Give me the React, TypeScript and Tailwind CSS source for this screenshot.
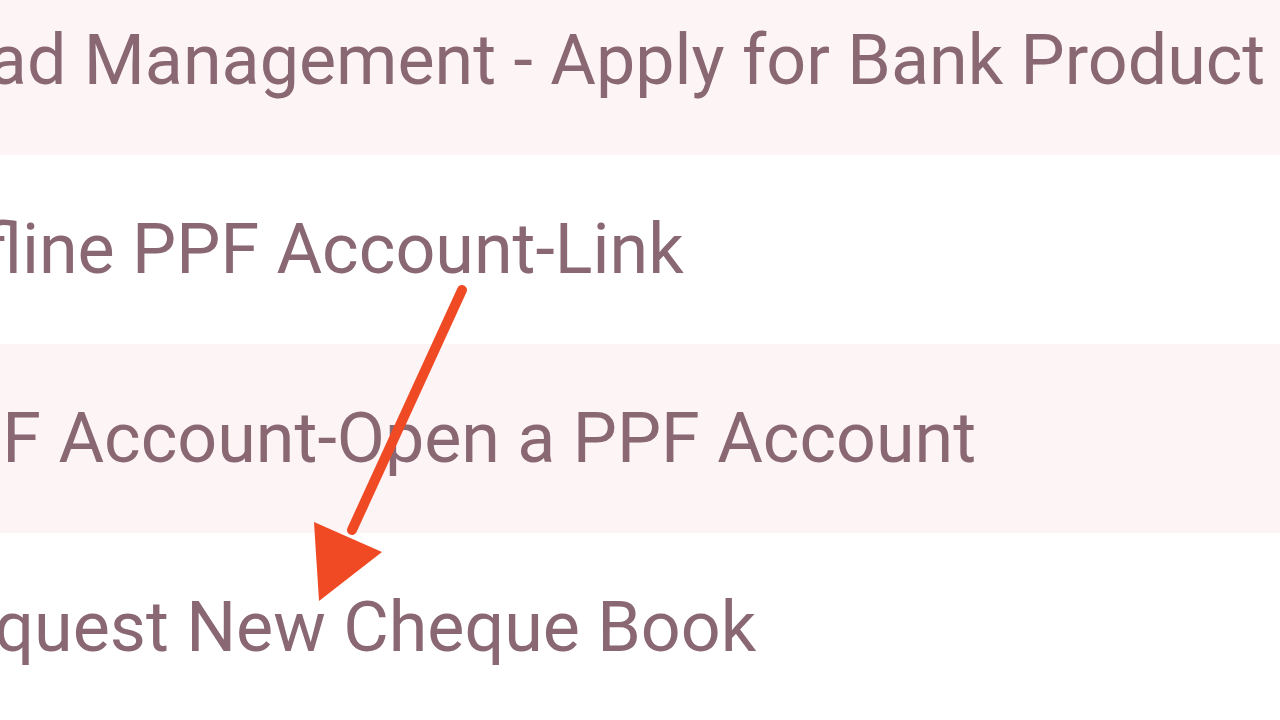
import React from 'react';

const items = [
  'Lead Management - Apply for Bank Product',
  'Offline PPF Account-Link',
  'PPF Account-Open a PPF Account',
  'Request New Cheque Book',
];

export default function App() {
  return (
    <div className="relative w-[1280px] h-[720px] overflow-hidden bg-white">
      <div className="-mt-[34px] flex flex-col">
        {items.map((label, i) => (
          <div
            key={label}
            className={`h-[189px] flex items-center ${i % 2 === 0 ? 'bg-[#fdf4f5]' : 'bg-white'}`}
          >
            <span
              className="-ml-[86px] whitespace-nowrap text-[70px] text-[#8a6873]"
              style={{ fontFamily: 'Roboto, "Noto Sans", sans-serif' }}
            >
              {label}
            </span>
          </div>
        ))}
      </div>

      {/* annotation arrow */}
      <svg className="absolute left-0 top-0" width="1280" height="720" viewBox="0 0 1280 720">
        <line x1="462" y1="290" x2="352" y2="530" stroke="#f04a24" strokeWidth="10" strokeLinecap="round" />
        <polygon points="314,522 382,552 319,601" fill="#f04a24" />
      </svg>
    </div>
  );
}
